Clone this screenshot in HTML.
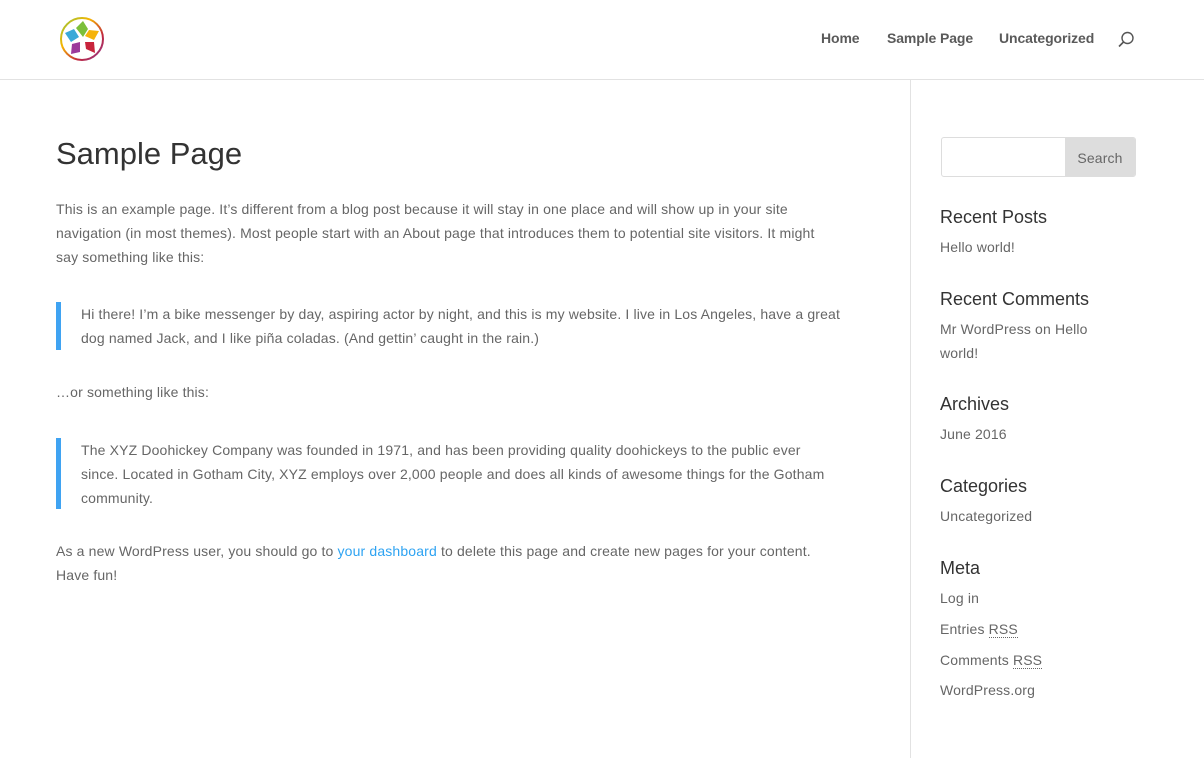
<!DOCTYPE html>
<html><head><meta charset="utf-8"><style>
*{margin:0;padding:0;box-sizing:border-box}
body{width:1204px;height:758px;overflow:hidden;background:#fff;font-family:"Liberation Sans",sans-serif;color:#666;font-size:14px;letter-spacing:.15px}
.hdr{position:absolute;left:0;top:0;width:1204px;height:80px;border-bottom:1px solid #e2e2e2}
.nav{position:absolute;top:30px;font-size:14px;font-weight:bold;color:#5a5a5a;letter-spacing:-.1px}
.vl{position:absolute;left:910px;top:80px;width:1px;height:678px;background:#e2e2e2}
.t{position:absolute;left:56px;white-space:nowrap;line-height:24px}
h1{position:absolute;left:56px;top:136px;font-size:31px;font-weight:normal;color:#333;letter-spacing:0}
.bq{position:absolute;left:56px;border-left:5px solid #3fa3f2}
.bq div{padding-left:20px;line-height:24px;white-space:nowrap}
a{color:#2ea3f2;text-decoration:none}
.s{position:absolute;left:940px;white-space:nowrap}
.sh{font-size:18px;color:#333;letter-spacing:0}
abbr{text-decoration:none;border-bottom:1px dotted #666}
</style></head><body>
<div class="hdr">
<svg style="position:absolute;left:59px;top:16px" width="46" height="46" viewBox="0 0 46 46">
<defs><linearGradient id="g" x1="0" y1="0" x2="1" y2="1"><stop offset="0" stop-color="#8cc63f"/><stop offset=".35" stop-color="#f7b500"/><stop offset=".7" stop-color="#c0273d"/><stop offset="1" stop-color="#8e3a96"/></linearGradient></defs>
<circle cx="23" cy="23" r="21" fill="none" stroke="url(#g)" stroke-width="2"/>
<path d="M17 12 L24 5 L29 13 L24 21 Z" fill="#7bbf3a"/>
<path d="M26 20 L30 14 L40 15 L35 24 Z" fill="#f5b30a"/>
<path d="M26 26 L35 26 L36 37 L27 33 Z" fill="#c8243c"/>
<path d="M21 26 L21 36 L12 38 L13 28 Z" fill="#9b3a9b"/>
<path d="M20 21 L12 26 L6 17 L15 13 Z" fill="#3aa9d8"/>
</svg>
<div class="nav" style="left:821px">Home</div>
<div class="nav" style="left:887px">Sample Page</div>
<div class="nav" style="left:999px">Uncategorized</div>
<svg style="position:absolute;left:1117px;top:31px" width="18" height="18" viewBox="0 0 18 18"><circle cx="10.5" cy="7" r="5.5" fill="none" stroke="#555" stroke-width="1.4"/><path d="M6.5 11 L2 15.5" stroke="#555" stroke-width="1.6"/></svg>
</div>
<div class="vl"></div>
<h1>Sample Page</h1>
<div class="t" style="top:197px">This is an example page. It’s different from a blog post because it will stay in one place and will show up in your site<br>navigation (in most themes). Most people start with an About page that introduces them to potential site visitors. It might<br>say something like this:</div>
<div class="bq" style="top:302px;height:48px"><div>Hi there! I’m a bike messenger by day, aspiring actor by night, and this is my website. I live in Los Angeles, have a great<br>dog named Jack, and I like piña coladas. (And gettin’ caught in the rain.)</div></div>
<div class="t" style="top:380px">…or something like this:</div>
<div class="bq" style="top:438px;height:71px"><div>The XYZ Doohickey Company was founded in 1971, and has been providing quality doohickeys to the public ever<br>since. Located in Gotham City, XYZ employs over 2,000 people and does all kinds of awesome things for the Gotham<br>community.</div></div>
<div class="t" style="top:539px">As a new WordPress user, you should go to <a>your dashboard</a> to delete this page and create new pages for your content.<br>Have fun!</div>
<div style="position:absolute;left:941px;top:137px;width:195px;height:40px;border:1px solid #ddd;border-radius:3px;overflow:hidden">
<div style="position:absolute;right:0;top:0;width:70px;height:40px;background:#ddd;color:#666;font-size:14px;line-height:40px;text-align:center">Search</div></div>
<div class="s sh" style="top:207px">Recent Posts</div>
<div class="s" style="top:239px">Hello world!</div>
<div class="s sh" style="top:289px">Recent Comments</div>
<div class="s" style="top:317px;line-height:24px">Mr WordPress on <span>Hello</span><br>world!</div>
<div class="s sh" style="top:394px">Archives</div>
<div class="s" style="top:426px">June 2016</div>
<div class="s sh" style="top:476px">Categories</div>
<div class="s" style="top:508px">Uncategorized</div>
<div class="s sh" style="top:558px">Meta</div>
<div class="s" style="top:590px">Log in</div>
<div class="s" style="top:621px">Entries <abbr>RSS</abbr></div>
<div class="s" style="top:652px">Comments <abbr>RSS</abbr></div>
<div class="s" style="top:682px">WordPress.org</div>
</body></html>
